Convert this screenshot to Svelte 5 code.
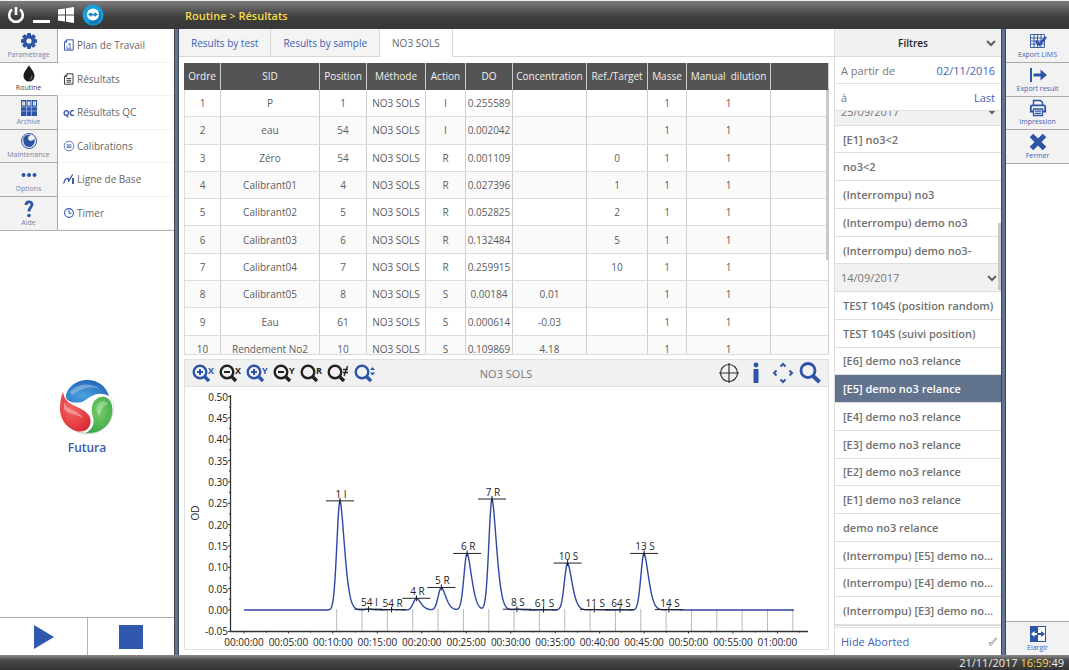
<script lang="ts">
  interface Marker {
    label: string;
    t: number;
    od: number;
  }

  const mainNav = [
    { id: "settings", label: "Paramétrage" },
    { id: "routine", label: "Routine" },
    { id: "archive", label: "Archive" },
    { id: "maintenance", label: "Maintenance" },
    { id: "options", label: "Options" },
    { id: "help", label: "Aide" },
  ];

  const subNav = [
    { id: "plan", label: "Plan de Travail" },
    { id: "results", label: "Résultats" },
    { id: "qc", label: "Résultats QC" },
    { id: "calib", label: "Calibrations" },
    { id: "baseline", label: "Ligne de Base" },
    { id: "timer", label: "Timer" },
  ];

  const actions = [
    { id: "lims", label: "Export LIMS" },
    { id: "export", label: "Export result" },
    { id: "print", label: "Impression" },
    { id: "close", label: "Fermer" },
  ];

  const tabs = ["Results by test", "Results by sample", "NO3 SOLS"];

  const columns = [
    { name: "Ordre", width: 37 },
    { name: "SID", width: 99 },
    { name: "Position", width: 47 },
    { name: "Méthode", width: 59 },
    { name: "Action", width: 40 },
    { name: "DO", width: 47 },
    { name: "Concentration", width: 74 },
    { name: "Ref./Target", width: 61 },
    { name: "Masse", width: 39 },
    { name: "Manual  dilution", width: 84 },
    { name: "", width: 58 },
  ];

  const rows = [
    ["1", "P", "1", "NO3 SOLS", "I", "0.255589", "", "", "1", "1", ""],
    ["2", "eau", "54", "NO3 SOLS", "I", "0.002042", "", "", "1", "1", ""],
    ["3", "Zéro", "54", "NO3 SOLS", "R", "0.001109", "", "0", "1", "1", ""],
    ["4", "Calibrant01", "4", "NO3 SOLS", "R", "0.027396", "", "1", "1", "1", ""],
    ["5", "Calibrant02", "5", "NO3 SOLS", "R", "0.052825", "", "2", "1", "1", ""],
    ["6", "Calibrant03", "6", "NO3 SOLS", "R", "0.132484", "", "5", "1", "1", ""],
    ["7", "Calibrant04", "7", "NO3 SOLS", "R", "0.259915", "", "10", "1", "1", ""],
    ["8", "Calibrant05", "8", "NO3 SOLS", "S", "0.00184", "0.01", "", "1", "1", ""],
    ["9", "Eau", "61", "NO3 SOLS", "S", "0.000614", "-0.03", "", "1", "1", ""],
    ["10", "Rendement No2", "10", "NO3 SOLS", "S", "0.109869", "4.18", "", "1", "1", ""],
  ];

  const runs = [
    { name: "25/09/2017", group: true },
    { name: "[E1] no3<2" },
    { name: "no3<2" },
    { name: "(Interrompu) no3" },
    { name: "(Interrompu) demo no3" },
    { name: "(Interrompu) demo no3-" },
    { name: "14/09/2017", group: true },
    { name: "TEST 104S (position random)" },
    { name: "TEST 104S (suivi position)" },
    { name: "[E6] demo no3 relance" },
    { name: "[E5] demo no3 relance" },
    { name: "[E4] demo no3 relance" },
    { name: "[E3] demo no3 relance" },
    { name: "[E2] demo no3 relance" },
    { name: "[E1] demo no3 relance" },
    { name: "demo no3 relance" },
    { name: "(Interrompu) [E5] demo no..." },
    { name: "(Interrompu) [E4] demo no..." },
    { name: "(Interrompu) [E3] demo no..." },
  ];

  const zooms = [
    { sign: "+", suffix: "X", blue: true, label: "Zoom in X" },
    { sign: "-", suffix: "X", blue: false, label: "Zoom out X" },
    { sign: "+", suffix: "Y", blue: true, label: "Zoom in Y" },
    { sign: "-", suffix: "Y", blue: false, label: "Zoom out Y" },
    { sign: "", suffix: "R", blue: false, label: "Reset zoom" },
    { sign: "", suffix: "cross", blue: false, label: "Zoom off" },
    { sign: "", suffix: "updown", blue: true, label: "Fit height" },
  ];

  // t in minutes
  const markers: Marker[] = [
    { label: "1 I", t: 10.8, od: 0.2556 },
    { label: "54 I", t: 14, od: 0.002 },
    { label: "54 R", t: 16.6, od: 0.0011 },
    { label: "4 R", t: 19.4, od: 0.0274 },
    { label: "5 R", t: 22.2, od: 0.0528 },
    { label: "6 R", t: 25.1, od: 0.1325 },
    { label: "7 R", t: 27.9, od: 0.2599 },
    { label: "8 S", t: 30.7, od: 0.0018 },
    { label: "61 S", t: 33.7, od: 0.0006 },
    { label: "10 S", t: 36.4, od: 0.1099 },
    { label: "11 S", t: 39.4, od: 0.001 },
    { label: "64 S", t: 42.3, od: 0.0005 },
    { label: "13 S", t: 45, od: 0.1325 },
    { label: "14 S", t: 47.8, od: 0.001 },
  ];

  const px = (t: number) => 60 + t * 8.89;
  const py = (od: number) => 223 - od * 427;

  const yTicks = Array.from({ length: 12 }, (_, i) => 0.5 - i * 0.05);
  const xTicks = Array.from({ length: 13 }, (_, i) => i * 5);
  const windows = Array.from({ length: 19 }, (_, i) => 152.7 + i * 25.34);

  // steep rise, slower tail on the right
  function signal(x: number): number {
    let od = 0;
    for (const m of markers) {
      const dx = x - px(m.t);
      od += m.od * (dx < 0 ? Math.exp(-(dx * dx) / 20) : Math.exp(-Math.pow(dx / 6.5, 1.65)));
    }
    return od;
  }

  const curve = Array.from({ length: 1101 }, (_, i) => {
    const x = 60 + i / 2;
    return `${x},${py(signal(x)).toFixed(1)}`;
  }).join(" ");

  function clock(min: number): string {
    return `${String(Math.floor(min / 60)).padStart(2, "0")}:${String(min % 60).padStart(2, "0")}:00`;
  }

  let activeNav = $state("routine");
  let activeTab = $state("NO3 SOLS");
  let selectedRun = $state("[E5] demo no3 relance");
  let from = $state("02/11/2016");
  let to = $state("Last");
  let hideAborted = $state(true);
</script>

{#snippet icon(id: string)}
  {#if id === "settings"}
    <svg width="18" height="18" viewBox="0 0 18 18">
      <g fill="currentColor">
        {#each [0, 45, 90, 135] as a}
          <rect x="7" y="1" width="4" height="16" rx="1" transform="rotate({a} 9 9)" />
        {/each}
        <circle cx="9" cy="9" r="6" />
      </g>
      <circle cx="9" cy="9" r="2.6" fill="#f2f2f3" />
    </svg>
  {:else if id === "routine"}
    <svg width="18" height="18" viewBox="0 0 18 18">
      <path d="M9 0c1 3 5.500 6.500 5.500 11a5.500 5.500 0 0 1-11 0C3.500 6.500 8 3 9 0z" fill="#1c1c1c" />
      <path d="M11.800 10.500c.4 2-.5 3.500-2 4" fill="none" stroke="#888" />
    </svg>
  {:else if id === "archive"}
    <svg width="18" height="18" viewBox="0 0 18 18">
      {#each [1, 6.500, 12] as x}
        <rect {x} y="1" width="5" height="16" fill="currentColor" />
        <rect x={x + 1} y="2.500" width="3" height="4" fill="#f2f2f3" />
        <path d="M{x + 2.500} 3v3M{x} 8h5M{x} 12h5" stroke="#9db2dd" stroke-width="0.8" />
      {/each}
    </svg>
  {:else if id === "maintenance"}
    <svg width="18" height="18" viewBox="0 0 18 18">
      <circle cx="9" cy="9" r="7.500" fill="none" stroke="currentColor" stroke-width="1" />
      <path d="M3.500 5.500C6 2 10 2.500 11 3c-3 1-3.500 3-2.500 4.500 1 1.800 4 2 6-1 1 5-2 8.500-5.500 8.500C4.500 15 2.500 10 3.500 5.500z" fill="currentColor" />
    </svg>
  {:else if id === "options"}
    <svg width="18" height="18" viewBox="0 0 18 18" fill="currentColor">
      <circle cx="3.500" cy="9" r="2" /><circle cx="9" cy="9" r="2" /><circle cx="14.500" cy="9" r="2" />
    </svg>
  {:else if id === "help"}
    <svg width="18" height="18" viewBox="0 0 18 18">
      <path d="M6 5C6.300 1 12 1 12 4.500 12 7.500 9 7 9 11.500" fill="none" stroke="currentColor" stroke-width="2.800" />
      <circle cx="9" cy="15.500" r="1.800" fill="currentColor" />
    </svg>
  {:else if id === "lims"}
    <svg width="18" height="18" viewBox="0 0 18 18">
      <path d="M1.500 2.500h14v13h-14zM1.500 6h14M1.500 9h14M1.500 12h14M5 2.500v13M8.500 2.500v13M12 2.500v13" fill="none" stroke="currentColor" stroke-width="0.9" />
      <path d="M7 9l3.500 3.500L17 5" fill="none" stroke="currentColor" stroke-width="2.600" />
    </svg>
  {:else if id === "export"}
    <svg width="18" height="18" viewBox="0 0 18 18">
      <path d="M1 2h2v14H1zM4.500 7.500h7V3.500L18 9l-6.500 5.500v-4h-7z" fill="currentColor" />
    </svg>
  {:else if id === "print"}
    <svg width="18" height="18" viewBox="0 0 18 18" fill="none" stroke="currentColor">
      <path d="M4.500 6V1.500h7l2 2V6" stroke-width="1.400" />
      <path d="M4 12.500H1.800V8c0-1 .5-1.700 1.500-1.700h11.400c1 0 1.500.7 1.500 1.700v4.500H14" stroke-width="1.800" />
      <path d="M4.500 10h9v6.500h-9zM6 12.200h6M6 14.400h6" stroke-width="1.300" />
    </svg>
  {:else if id === "close"}
    <svg width="18" height="18" viewBox="0 0 18 18">
      <path d="M2.500 2.500l13 13M15.500 2.500l-13 13" stroke="currentColor" stroke-width="5" />
    </svg>
  {:else if id === "widen"}
    <svg width="18" height="18" viewBox="0 0 18 18">
      <rect x="1.500" y="1.500" width="15" height="15" fill="#fff" stroke="currentColor" />
      <rect x="1" y="1" width="8" height="16" fill="currentColor" />
      <path d="M8 8v2H5.500v2L2 9l3.500-3v2z" fill="#fff" />
      <path d="M9 8h3V6l4 3-4 3v-2H9z" fill="currentColor" />
    </svg>
  {:else if id === "plan"}
    <svg width="12" height="12" viewBox="0 0 12 12" fill="none" stroke="#3a5bab">
      <path d="M3.500.8h6.700v10.400H1.500V3zM1.500 3.200h2.200V.8" />
      <path d="M5 5.500l2-1v5M4 7v3h4.500" stroke-width="0.9" />
    </svg>
  {:else if id === "results"}
    <svg width="12" height="12" viewBox="0 0 12 12" fill="none" stroke="#3b3b3b">
      <path d="M4 .8h6v10.400H1.500V3.300zM1.500 3.500H4V.8M3.500 5.500h4.700M3.500 7.300h4.700M3.500 9.100h4.700" />
    </svg>
  {:else if id === "qc"}
    <b class="qc">QC</b>
  {:else if id === "calib"}
    <svg width="12" height="12" viewBox="0 0 12 12" fill="none" stroke="#3a5bab">
      <circle cx="6" cy="6" r="4.800" stroke-width="0.8" />
      <path d="M3.500 5h5M3.500 7.200h5" stroke-width="1.200" />
    </svg>
  {:else if id === "baseline"}
    <svg width="12" height="12" viewBox="0 0 12 12" fill="none" stroke="#2c4c9e" stroke-width="1.200">
      <path d="M.5 10.500L2.500 6l2.500-.5.7 2.500 4-6.500" />
      <path d="M10 5v6" stroke-width="1.800" />
    </svg>
  {:else if id === "timer"}
    <svg width="12" height="12" viewBox="0 0 12 12" fill="none" stroke="#3a5bab">
      <circle cx="6" cy="6" r="4.400" stroke-width="1.100" />
      <path d="M6 3v3.300h2.500" />
    </svg>
  {/if}
{/snippet}

{#snippet chevron()}
  <svg width="10" height="8" viewBox="0 0 10 8" fill="none" stroke="#606060" stroke-width="2">
    <path d="M1 2l4 4 4-4" />
  </svg>
{/snippet}

<div class="app">
  <header>
    <div class="window-buttons">
      <button aria-label="Power">
        <svg width="18" height="18" viewBox="0 0 18 18" fill="none" stroke="#fff" stroke-width="2.600">
          <path d="M5 3.500a6.800 6.800 0 1 0 8 0M9 1v8" />
        </svg>
      </button>
      <button aria-label="Minimize">
        <svg width="18" height="18" viewBox="0 0 18 18"><rect x="1" y="14" width="17" height="3" fill="#fff" /></svg>
      </button>
      <button aria-label="Windows">
        <svg width="18" height="18" viewBox="0 0 18 18" fill="#fff">
          <path d="M1 3.500l7-1v6H1zM9 2.300L17 1v7.500H9zM1 9.500h7v6l-7-1zM9 9.500h8V17l-8-1.300z" />
        </svg>
      </button>
      <button aria-label="Remote support">
        <svg width="22" height="22" viewBox="0 0 22 22">
          <circle cx="11" cy="11" r="10.500" fill="#1b9fdc" />
          <path d="M6 18.500L18.500 7a10 10 0 0 1-8 14z" fill="#0d7dbb" />
          <circle cx="11" cy="10.500" r="6" fill="#fff" />
          <path d="M6 10.500l3.500-2.500v1.700h3V8l3.500 2.500-3.500 2.500v-1.600h-3V13z" fill="#1783c4" />
        </svg>
      </button>
    </div>
    <nav class="crumbs" aria-label="Breadcrumb">Routine &gt; Résultats</nav>
  </header>

  <main>
    <aside class="left">
      <div class="menus">
        <nav class="main-nav">
          {#each mainNav as item}
            <button class="tile" class:active={activeNav === item.id} onclick={() => (activeNav = item.id)}>
              {@render icon(item.id)}
              <span>{item.label}</span>
            </button>
          {/each}
        </nav>
        <nav class="sub-nav">
          {#each subNav as item}
            <button>
              <span class="sub-icon">{@render icon(item.id)}</span>
              {item.label}
            </button>
          {/each}
        </nav>
      </div>

      <div class="brand">
        <svg width="56" height="56" viewBox="0 0 56 56">
          <defs>
            <radialGradient id="blue" cx="0.4" cy="0.7" r="0.8">
              <stop offset="0" stop-color="#4aa3e2" /><stop offset="1" stop-color="#1f5fb2" />
            </radialGradient>
            <radialGradient id="red" cx="0.4" cy="0.4" r="0.7">
              <stop offset="0" stop-color="#f5655f" /><stop offset="1" stop-color="#d92c37" />
            </radialGradient>
            <radialGradient id="green" cx="0.5" cy="0.4" r="0.7">
              <stop offset="0" stop-color="#79cf6c" /><stop offset="1" stop-color="#35a341" />
            </radialGradient>
          </defs>
          <circle cx="28.500" cy="29" r="26.500" fill="#d5d8db" />
          <circle cx="27.500" cy="27" r="26.500" fill="#fff" />
          <path d="M7 16C9 8 17 1 28 1c11 0 19 6 22 16-6-3-12-3-17 0-5 2-7 6-13 6.500C12 24 6 22 7 16z" fill="url(#blue)" />
          <path d="M4 13c1 6 4 10 9 12.500 6 3 13 5 17 11 4 7 0 16-8 16C12 53 1 43 1 30c0-7 1-12 3-17z" fill="url(#red)" />
          <path d="M27 54c5-3 8-7 7.500-13-.5-5-2.500-8-1.500-13 1-7 7-11.500 13-10 7 2 8 10 7 17-2 12-12 20-26 19z" fill="url(#green)" />
          <path d="M11 13C19 4 31 3 41 10c-10-4-19 0-28 6z" fill="#fff" opacity="0.3" />
          <path d="M5 23c3 9 13 7 19 16-9-5-17-4-19-9z" fill="#fff" opacity="0.35" />
          <path d="M38 27c3-6 9-6 11-1-5-1-6 5-9 11-2-3-3-7-2-10z" fill="#fff" opacity="0.3" />
        </svg>
        <strong>Futura</strong>
      </div>

      <div class="run-controls">
        <button aria-label="Start">
          <svg width="24" height="24" viewBox="0 0 24 24"><path d="M2 0l20 12L2 24z" fill="#3058ae" /></svg>
        </button>
        <button aria-label="Stop">
          <svg width="24" height="24" viewBox="0 0 24 24"><path d="M0 0h24v24H0z" fill="#3058ae" /></svg>
        </button>
      </div>
    </aside>

    <div class="splitter"></div>

    <section class="center">
      <div class="tabs" role="tablist">
        {#each tabs as tab}
          <button role="tab" aria-selected={activeTab === tab} class:active={activeTab === tab} onclick={() => (activeTab = tab)}>{tab}</button>
        {/each}
      </div>

      <div class="results">
        <table>
          <colgroup>
            {#each columns as col}
              <col style="width: {col.width / 6.45}%" />
            {/each}
          </colgroup>
          <thead>
            <tr>
              {#each columns as col}
                <th>{col.name}</th>
              {/each}
            </tr>
          </thead>
          <tbody>
            {#each rows as row}
              <tr>
                {#each row as cell}
                  <td>{cell}</td>
                {/each}
              </tr>
            {/each}
          </tbody>
        </table>
        <div class="thumb table-thumb"></div>
      </div>

      <div class="chart">
        <div class="toolbar">
          <div class="tools">
            {#each zooms as z}
              <button aria-label={z.label} class:blue={z.blue}>
                <svg width="24" height="22" viewBox="0 0 24 22">
                  <circle cx="9" cy="10" r="6.300" fill="none" stroke="currentColor" stroke-width="2.400" />
                  <path d="M13.500 14.500l4.500 4.500" stroke="currentColor" stroke-width="3.400" />
                  {#if z.sign}
                    <path d={z.sign === "+" ? "M6 10h6M9 7v6" : "M6 10h6"} stroke="currentColor" stroke-width="2" />
                  {/if}
                  {#if z.suffix === "cross"}
                    <path d="M17 7.500h5M17 10.500h5M21.500 4l-3.500 10" stroke="currentColor" stroke-width="1.300" />
                  {:else if z.suffix === "updown"}
                    <path d="M17 8h5L19.500 5zM17 10.500h5l-2.500 3z" fill="currentColor" />
                  {:else}
                    <text x="17" y="12" font-size="9" font-weight="700" fill="currentColor">{z.suffix}</text>
                  {/if}
                </svg>
              </button>
            {/each}
          </div>
          <h2>NO3 SOLS</h2>
          <div class="tools end">
            <button aria-label="Crosshair">
              <svg width="22" height="22" viewBox="0 0 22 22" fill="none" stroke="#333" stroke-width="1.200">
                <circle cx="11" cy="11" r="8.500" /><path d="M1 11h20M11 1v20" />
              </svg>
            </button>
            <button aria-label="Information" class="blue">
              <svg width="22" height="22" viewBox="0 0 22 22" fill="currentColor">
                <circle cx="11" cy="3" r="2.400" /><rect x="8.500" y="7" width="5" height="14" />
              </svg>
            </button>
            <button aria-label="Move" class="blue">
              <svg width="22" height="22" viewBox="0 0 22 22" fill="none" stroke="currentColor" stroke-width="2">
                <path d="M8.500 4.500L11 2l2.500 2.500M8.500 17.500L11 20l2.500-2.500M4.500 8.500L2 11l2.500 2.500M17.500 8.500L20 11l-2.500 2.500" />
              </svg>
            </button>
            <button aria-label="Search" class="blue">
              <svg width="22" height="22" viewBox="0 0 22 22" fill="none" stroke="currentColor">
                <circle cx="9" cy="8.500" r="7" stroke-width="2.800" /><path d="M14 14l6.500 6" stroke-width="4" />
              </svg>
            </button>
          </div>
        </div>

        <svg class="plot" viewBox="1 0 643 262" role="img" aria-label="OD versus time">
          <g stroke="#b9b9bb">
            {#each windows as x}
              <path d="M{x} 222V244" />
            {/each}
          </g>
          <g stroke="#333" fill="none">
            <path d="M46.500 8V244.500H624" stroke-width="1.300" />
            {#each yTicks as od}
              <path d="M44 {py(od)}h2.500" />
              {#if od > 0}<path d="M45 {py(od - 0.025)}h1.500" />{/if}
            {/each}
            {#each xTicks as t}
              <path d="M{px(t)} 244v2.500M{px(t + 2.5)} 244v1.500" />
            {/each}
          </g>
          <polyline points={curve} fill="none" stroke="#2f46a4" stroke-width="1.400" />
          {#each markers as m}
            <path d="M{px(m.t) - 14} {py(m.od)}h28M{px(m.t)} {py(m.od) - 3}v6" stroke="#222" />
            <text x={px(m.t) + 1} y={py(m.od) - 3} text-anchor="middle">{m.label}</text>
          {/each}
          {#each yTicks as od}
            <text x="44" y={py(od) + 4} text-anchor="end">{Math.abs(od) < 0.001 ? "0.00" : od.toFixed(2)}</text>
          {/each}
          {#each xTicks as t}
            <text x={px(t)} y="259" text-anchor="middle">{clock(t)}</text>
          {/each}
          <text transform="translate(15 126) rotate(-90)" text-anchor="middle">OD</text>
        </svg>
      </div>
    </section>

    <aside class="filters">
      <button class="filter-head">
        <span>Filtres</span>
        {@render chevron()}
      </button>
      <div class="field">
        <label for="from">A partir de</label>
        <input id="from" bind:value={from} />
      </div>
      <div class="field">
        <label for="to">à</label>
        <input id="to" bind:value={to} />
      </div>
      <div class="runs">
        <ul>
          {#each runs as run}
            <li class:group={run.group}>
              <button class:selected={selectedRun === run.name} onclick={() => { if (!run.group) selectedRun = run.name; }}>
                <span>{run.name}</span>
                {#if run.group}{@render chevron()}{/if}
              </button>
            </li>
          {/each}
        </ul>
        <div class="thumb runs-thumb"></div>
      </div>
      <label class="aborted">
        Hide Aborted
        <input type="checkbox" bind:checked={hideAborted} />
        <svg width="10" height="10" viewBox="0 0 10 10" fill="none" stroke="#8a949e">
          <path d="M1 6l1.500 3L9 1.500 7.500 1 3 6.500 2.200 5z" stroke-width="0.9" />
        </svg>
      </label>
    </aside>

    <div class="splitter"></div>

    <aside class="actions">
      <div class="action-list">
        {#each actions as action}
          <button class="tile">
            {@render icon(action.id)}
            <span>{action.label}</span>
          </button>
        {/each}
      </div>
      <button class="tile widen">
        {@render icon("widen")}
        <span>Elargir</span>
      </button>
    </aside>
  </main>

  <footer>
    <time>21/11/2017 <em>16:59</em>:49</time>
  </footer>
</div>

<style>
  :global(body) {
    margin: 0;
    background: #fff;
  }

  .app {
    display: flex;
    flex-direction: column;
    height: 100vh;
    overflow: hidden;
    font-family: "Open Sans", "Noto Sans", sans-serif;
    font-size: 10px;
    color: #5c5c5c;
  }

  .app :global(*) {
    box-sizing: border-box;
  }

  button,
  input {
    margin: 0;
    padding: 0;
    border: 0;
    background: none;
    font: inherit;
    color: inherit;
    cursor: pointer;
  }

  svg {
    display: block;
    flex-shrink: 0;
  }

  header {
    display: flex;
    align-items: center;
    height: 29px;
    flex-shrink: 0;
    border-top: 1px solid #eee;
    background: linear-gradient(#7d7d7d, #505050 40%, #3c3c3c 60%, #383838);
  }

  .window-buttons {
    display: flex;
    align-items: center;
    gap: 7px;
    width: 185px;
    padding-left: 7px;
  }

  .crumbs {
    font-size: 11px;
    font-weight: 600;
    color: #f7dc47;
  }

  main {
    display: flex;
    flex: 1;
    min-height: 0;
  }

  .splitter {
    width: 5px;
    flex-shrink: 0;
    background: #5f7490;
    border: solid #3d4653;
    border-width: 0 1px;
  }

  .left {
    display: flex;
    flex-direction: column;
    width: 174px;
    flex-shrink: 0;
  }

  .menus {
    display: grid;
    grid-template-columns: 58px 1fr;
    height: 202px;
    border-bottom: 1px solid #b4b4b4;
  }

  .main-nav,
  .sub-nav {
    display: grid;
    grid-template-rows: repeat(6, 1fr);
  }

  .tile {
    display: flex;
    flex-direction: column;
    align-items: center;
    justify-content: center;
    min-height: 0;
    background: #f2f2f3;
    border-bottom: 1px solid #a9a9a9;
    color: #2c55a5;
  }

  .tile span {
    font-size: 7px;
    line-height: 9px;
    color: #7583a8;
  }

  .main-nav .tile {
    border-right: 1px solid #a9a9a9;
  }

  .main-nav .tile:last-child {
    border-bottom: 0;
  }

  .main-nav .tile.active {
    background: #fff;
    border-right-color: #fff;
  }

  .tile.active span {
    color: #53383a;
  }

  .sub-nav button {
    display: flex;
    align-items: center;
    gap: 2px;
    padding-left: 5px;
    border-bottom: 1px solid #f3f3f3;
    color: #666;
    text-align: left;
  }

  .sub-icon {
    width: 12px;
  }

  .qc {
    font-size: 8px;
    color: #2c4c9e;
  }

  .brand {
    display: flex;
    flex: 1;
    flex-direction: column;
    align-items: center;
    justify-content: center;
    gap: 5px;
    padding-bottom: 13px;
    color: #3a5bb0;
    font-size: 12px;
    line-height: 16px;
  }

  .brand strong {
    font-weight: 600;
  }

  .run-controls {
    display: grid;
    grid-template-columns: 1fr 1fr;
    height: 38px;
    border-top: 1px solid #a9a9a9;
  }

  .run-controls button {
    display: flex;
    align-items: center;
    justify-content: center;
  }

  .run-controls button + button {
    border-left: 1px solid #b4b4b4;
  }

  .center {
    display: flex;
    flex: 1;
    flex-direction: column;
    min-width: 0;
    border-right: 1px solid #ddd;
  }

  .tabs {
    display: flex;
    height: 28px;
    flex-shrink: 0;
    border-bottom: 1px solid #d8d8d8;
  }

  .tabs button {
    height: 28px;
    padding: 0 12px;
    background: #f4f4f5;
    border-right: 1px solid #d8d8d8;
    border-bottom: 1px solid #d8d8d8;
    color: #3c5db4;
  }

  .tabs button.active {
    background: #fff;
    border-bottom-color: #fff;
    color: #666;
  }

  .results {
    position: relative;
    height: 292px;
    flex-shrink: 0;
    margin: 6px 5px 4px;
    overflow: hidden;
    border-bottom: 1px solid #dcdcdc;
  }

  table {
    width: 100%;
    height: 300px;
    table-layout: fixed;
    border-collapse: separate;
    border-spacing: 0;
  }

  th,
  td {
    padding: 0;
    border-right: 1px solid #cfcfcf;
    border-bottom: 1px solid #dcdcdc;
    text-align: center;
    white-space: nowrap;
    line-height: 10px;
  }

  td:first-child {
    border-left: 1px solid #dcdcdc;
  }

  th {
    height: 27px;
    background: #545454;
    border-bottom-color: #545454;
    color: #f0f0f0;
    font-weight: 400;
    white-space: pre;
  }

  tbody tr:nth-child(even) {
    background: #fafafa;
  }

  .thumb {
    position: absolute;
    right: 0;
    width: 3px;
    background: #c9c9c9;
  }

  .table-thumb {
    top: 27px;
    height: 170px;
  }

  .chart {
    display: flex;
    flex: 1;
    flex-direction: column;
    min-height: 0;
    margin: 0 5px 5px;
    border: 1px solid #dfe1e1;
  }

  .toolbar {
    display: grid;
    grid-template-columns: 1fr auto 1fr;
    align-items: center;
    height: 27px;
    flex-shrink: 0;
    padding: 0 7px 0 6px;
    background: #f1f1f2;
    border-bottom: 1px solid #e0e0e0;
  }

  h2 {
    margin: 0;
    font-size: 11px;
    font-weight: 400;
    color: #777;
  }

  .tools {
    display: flex;
    gap: 3px;
    color: #222;
  }

  .tools.end {
    justify-content: flex-end;
    gap: 5px;
  }

  .tools .blue {
    color: #2c55a8;
  }

  .plot {
    flex: 1;
    width: 100%;
    min-height: 0;
  }

  .plot text {
    fill: #222;
    font-size: 10px;
  }

  .filters {
    display: flex;
    flex-direction: column;
    width: 166px;
    flex-shrink: 0;
    font-size: 11px;
  }

  .filter-head {
    display: flex;
    align-items: center;
    height: 28px;
    flex-shrink: 0;
    padding: 0 5px;
    background: #f1f1f2;
    border-bottom: 1px solid #ddd;
    color: #222;
  }

  .filter-head span {
    flex: 1;
    font-weight: 600;
    font-size: 10px;
  }

  .field {
    display: flex;
    align-items: center;
    justify-content: space-between;
    height: 27px;
    flex-shrink: 0;
    padding: 0 6px;
    border-bottom: 1px solid #e2e2e2;
    color: #777;
  }

  .field input {
    width: 80px;
    color: #4263b8;
    text-align: right;
  }

  .runs {
    position: relative;
    flex: 1;
    min-height: 0;
    overflow: hidden;
    border-bottom: 1px solid #ddd;
  }

  /* list is scrolled halfway past its first heading */
  ul {
    display: flex;
    flex-direction: column;
    height: calc(100% + 13px);
    margin: -13px 0 0;
    padding: 0;
    list-style: none;
  }

  li {
    flex: 1;
    min-height: 0;
    border-bottom: 1px solid #dedede;
  }

  li button {
    display: flex;
    align-items: center;
    justify-content: space-between;
    width: 100%;
    height: 100%;
    padding: 0 4px 0 8px;
    font-weight: 600;
    color: #707070;
    white-space: nowrap;
    text-align: left;
  }

  .group button {
    padding-left: 6px;
    background: #f1f1f2;
    font-weight: 400;
    color: #777;
  }

  li button.selected {
    background: #61738d;
    color: #fff;
  }

  .runs-thumb {
    top: 112px;
    height: 67px;
  }

  .aborted {
    display: flex;
    align-items: center;
    justify-content: space-between;
    height: 28px;
    flex-shrink: 0;
    margin-top: 1px;
    padding: 0 3px 0 6px;
    border-top: 1px solid #e2e2e2;
    color: #4263b8;
    cursor: pointer;
  }

  .aborted input {
    position: absolute;
    opacity: 0;
  }

  .actions {
    display: flex;
    flex-direction: column;
    justify-content: space-between;
    flex-shrink: 0;
    width: 63px;
  }

  .action-list {
    display: grid;
    grid-template-rows: repeat(4, 1fr);
    height: 135px;
  }

  .actions .tile span {
    color: #4263b8;
  }

  .widen {
    height: 34px;
    border-top: 1px solid #a9a9a9;
    border-bottom: 0;
  }

  footer {
    display: flex;
    align-items: center;
    justify-content: flex-end;
    height: 15px;
    flex-shrink: 0;
    padding-right: 5px;
    background: linear-gradient(#8a8a8a, #4a4a4a 35%, #333);
    font-size: 11px;
    line-height: 14px;
    color: #eee;
  }

  em {
    font-style: normal;
    color: #f7dc47;
  }
</style>
